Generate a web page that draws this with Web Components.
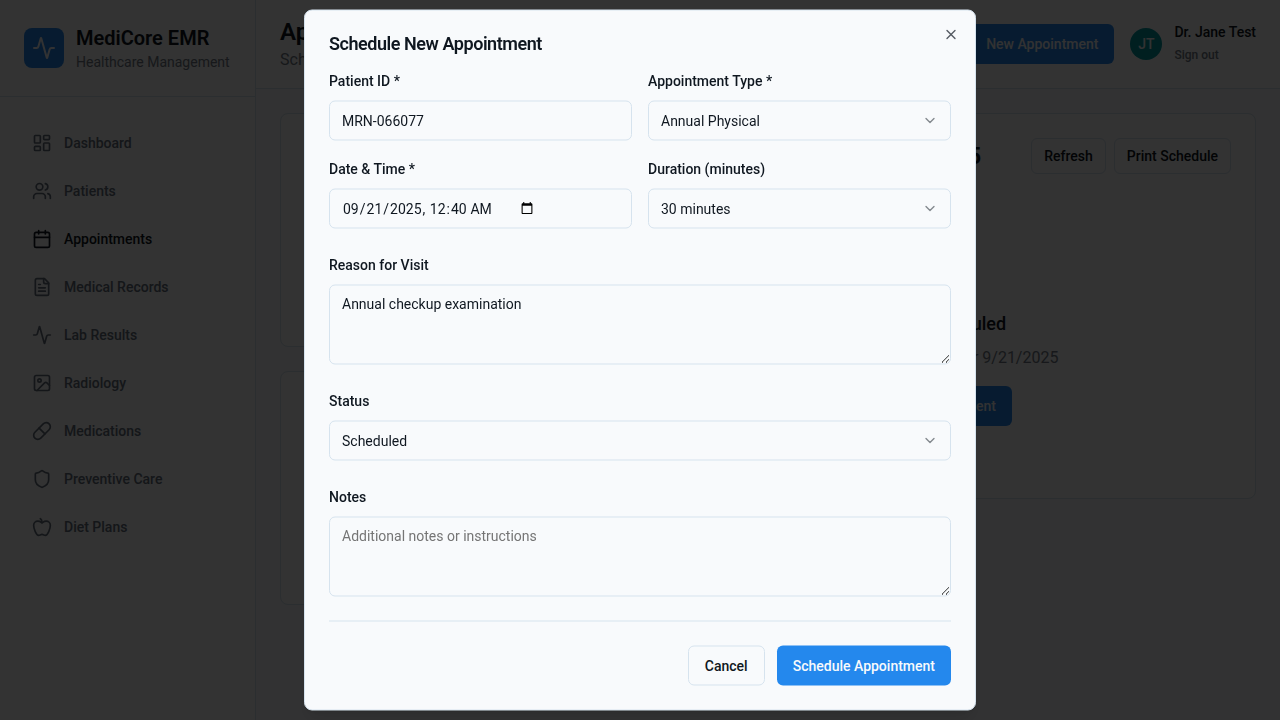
<!DOCTYPE html>
<html lang="en">
<head>
<meta charset="utf-8">
<title>MediCore EMR</title>
<style>
  :root {
    --bg: #f8fafc; --card: #fcfdfe; --fg: #0f1720; --muted: #737b85; --nav: #66707c;
    --border: #d6e3ee; --primary: #2488ed; --accent: #009aa2;
  }
  html, body { margin: 0; height: 100%; overflow: hidden; }
  body { font: 16px/24px Roboto, "Liberation Sans", sans-serif; color: var(--fg); background: var(--bg); }
</style>
</head>
<body>
<emr-app></emr-app>
<script>
const ICONS = {
  activity: '<path d="M22 12h-2.48a2 2 0 0 0-1.93 1.46l-2.35 8.36a.25.25 0 0 1-.48 0L9.24 2.18a.25.25 0 0 0-.48 0l-2.35 8.36A2 2 0 0 1 4.49 12H2"/>',
  dashboard: '<rect width="7" height="9" x="3" y="3" rx="1"/><rect width="7" height="5" x="14" y="3" rx="1"/><rect width="7" height="9" x="14" y="12" rx="1"/><rect width="7" height="5" x="3" y="16" rx="1"/>',
  users: '<path d="M16 21v-2a4 4 0 0 0-4-4H6a4 4 0 0 0-4 4v2"/><circle cx="9" cy="7" r="4"/><path d="M22 21v-2a4 4 0 0 0-3-3.87"/><path d="M16 3.13a4 4 0 0 1 0 7.75"/>',
  calendar: '<path d="M8 2v4"/><path d="M16 2v4"/><rect width="18" height="18" x="3" y="4" rx="2"/><path d="M3 10h18"/>',
  file: '<path d="M15 2H6a2 2 0 0 0-2 2v16a2 2 0 0 0 2 2h12a2 2 0 0 0 2-2V7Z"/><path d="M14 2v4a2 2 0 0 0 2 2h4"/><path d="M10 9H8"/><path d="M16 13H8"/><path d="M16 17H8"/>',
  image: '<rect width="18" height="18" x="3" y="3" rx="2" ry="2"/><circle cx="9" cy="9" r="2"/><path d="m21 15-3.086-3.086a2 2 0 0 0-2.828 0L6 21"/>',
  pill: '<path d="m10.5 20.5 10-10a4.95 4.95 0 1 0-7-7l-10 10a4.95 4.95 0 1 0 7 7Z"/><path d="m8.5 8.5 7 7"/>',
  shield: '<path d="M20 13c0 5-3.5 7.5-7.66 8.95a1 1 0 0 1-.67-.01C7.5 20.5 4 18 4 13V6a1 1 0 0 1 1-1c2 0 4.5-1.2 6.24-2.72a1.17 1.17 0 0 1 1.52 0C14.51 3.81 17 5 19 5a1 1 0 0 1 1 1z"/>',
  apple: '<path d="M12 20.94c1.5 0 2.75 1.06 4 1.06 3 0 6-8 6-12.22A4.91 4.91 0 0 0 17 5c-2.22 0-4 1.44-5 2-1-.56-2.78-2-5-2a4.9 4.9 0 0 0-5 4.78C2 14 5 22 8 22c1.25 0 2.5-1.06 4-1.06Z"/><path d="M10 2c1 .5 2 2 2 5"/>',
  chevron: '<path d="m6 9 6 6 6-6"/>',
  x: '<path d="M18 6 6 18"/><path d="m6 6 12 12"/>',
  plus: '<path d="M5 12h14"/><path d="M12 5v14"/>'
};

function define(name, css, html) {
  customElements.define(name, class extends HTMLElement {
    constructor() {
      super();
      const markup = typeof html === 'function' ? html(this) : html;
      this.attachShadow({ mode: 'open' }).innerHTML =
        `<style>*{box-sizing:border-box}${css}</style>${markup}`;
    }
  });
}

define('emr-icon',
  `:host{display:block;flex:none;width:20px;height:20px} svg{display:block;width:100%;height:100%}`,
  el => `<svg viewBox="0 0 24 24" fill="none" stroke="currentColor" stroke-width="2" stroke-linecap="round" stroke-linejoin="round">${ICONS[el.getAttribute('name')]}</svg>`);

define('emr-button',
  `:host{display:inline-flex;box-sizing:border-box;align-items:center;justify-content:center;gap:8px;height:40px;padding:0 16px;border-radius:6px;font-size:14px;line-height:20px;font-weight:500;white-space:nowrap;background:var(--primary);color:#f8fafc}
   :host([variant=outline]){background:var(--btn-bg,var(--bg));border:1px solid var(--border);color:var(--fg)}
   :host([size=sm]){height:36px;padding:0 12px}
   ::slotted(emr-icon){width:16px;height:16px}`,
  `<slot></slot>`);

define('emr-nav-item',
  `:host{display:flex;align-items:center;gap:12px;height:44px;padding:0 16px;box-sizing:border-box;font-size:14px;line-height:20px;font-weight:500;color:var(--nav)}
   :host([active]){color:var(--fg)}`,
  el => `<emr-icon name="${el.getAttribute('icon')}"></emr-icon><slot></slot>`);

define('emr-sidebar',
  `:host{display:flex;flex-direction:column;width:256px;flex:none;box-sizing:border-box;border-right:1px solid var(--border);background:var(--card)}
   header{display:flex;align-items:center;gap:12px;padding:24px;border-bottom:1px solid var(--border)}
   .logo{display:grid;place-items:center;width:40px;height:40px;border-radius:8px;background:var(--primary);color:#f8fafc}
   .logo emr-icon{width:24px;height:24px}
   h1{margin:0;font-size:20px;line-height:28px;font-weight:600;white-space:nowrap}
   p{margin:0;font-size:14px;line-height:20px;color:var(--muted);white-space:nowrap}
   nav{display:flex;flex-direction:column;gap:4px;padding:24px 16px}`,
  `<header><div class="logo"><emr-icon name="activity"></emr-icon></div><div><h1>MediCore EMR</h1><p>Healthcare Management</p></div></header>
   <nav>
    <emr-nav-item icon="dashboard">Dashboard</emr-nav-item>
    <emr-nav-item icon="users">Patients</emr-nav-item>
    <emr-nav-item icon="calendar" active>Appointments</emr-nav-item>
    <emr-nav-item icon="file">Medical Records</emr-nav-item>
    <emr-nav-item icon="activity">Lab Results</emr-nav-item>
    <emr-nav-item icon="image">Radiology</emr-nav-item>
    <emr-nav-item icon="pill">Medications</emr-nav-item>
    <emr-nav-item icon="shield">Preventive Care</emr-nav-item>
    <emr-nav-item icon="apple">Diet Plans</emr-nav-item>
   </nav>`);

define('emr-topbar',
  `:host{display:flex;align-items:center;justify-content:space-between;height:89px;box-sizing:border-box;padding:0 24px;border-bottom:1px solid var(--border);background:var(--card)}
   h2{margin:0;font-size:24px;line-height:32px;font-weight:600} p{margin:0;color:var(--muted)}
   .right{display:flex;align-items:center;gap:16px} .user{display:flex;align-items:center;gap:12px}
   .avatar{display:grid;place-items:center;width:32px;height:32px;border-radius:50%;background:var(--accent);color:#f8fafc;font-size:14px;font-weight:500}
   .name{font-size:14px;line-height:20px;font-weight:500;white-space:nowrap} .out{font-size:12px;line-height:24px;padding-top:1px;margin-bottom:-1px;font-weight:500;color:var(--muted)}`,
  `<div><h2>Appointments</h2><p>Schedule</p></div>
   <div class="right"><emr-button><emr-icon name="plus"></emr-icon>New Appointment</emr-button>
   <div class="user"><div class="avatar">JT</div><div><div class="name">Dr. Jane Test</div><div class="out">Sign out</div></div></div></div>`);

define('emr-card',
  `:host{display:block;box-sizing:border-box;padding:24px;border:1px solid var(--border);border-radius:8px;background:var(--card)}`,
  `<slot></slot>`);

define('emr-schedule',
  `:host{display:grid;grid-template-columns:226px 1fr;gap:24px;align-items:start;padding:24px}
   .side{display:grid;gap:24px} .side emr-card{height:234px}
   .head{display:flex;justify-content:flex-end;align-items:center;gap:8px;height:36px}
   .head h3{margin:0 42px 0 0;font-size:24px;line-height:32px;font-weight:600}
   emr-button{--btn-bg:var(--card)}
   .empty{display:flex;flex-direction:column;align-items:center;padding:72px 0 48px}
   .empty>emr-icon{width:48px;height:48px;color:var(--muted);margin-bottom:16px}
   h4{margin:0 0 8px;font-size:18px;line-height:28px;font-weight:500}
   p{margin:0 0 16px;color:var(--muted)}
   .empty emr-button{width:238px;justify-content:flex-end}`,
  `<div class="side"><emr-card></emr-card><emr-card></emr-card></div>
   <emr-card><div class="head"><h3>9/21/2025</h3><emr-button variant="outline" size="sm">Refresh</emr-button><emr-button variant="outline" size="sm">Print Schedule</emr-button></div>
   <div class="empty"><emr-icon name="calendar"></emr-icon><h4>No appointments scheduled</h4><p>No appointments are scheduled for 9/21/2025</p><emr-button><emr-icon name="plus"></emr-icon>Schedule an Appointment</emr-button></div></emr-card>`);

define('emr-field',
  `:host{display:grid;gap:8px;font-size:14px} label{display:block;height:24px;line-height:24px;font-weight:500}`,
  el => `<label>${el.getAttribute('label')}</label><slot></slot>`);

const BOX = `box-sizing:border-box;width:100%;border:1px solid var(--border);border-radius:6px;background:var(--bg);color:var(--fg);font:14px/20px Roboto,"Liberation Sans",sans-serif;padding:8px 12px;margin:0;`;

define('emr-input',
  `:host{display:block} input{${BOX}display:flex;height:40px;outline:0}`,
  el => `<input type="${el.getAttribute('type') || 'text'}" value="${el.getAttribute('value')}">`);

define('emr-select',
  `:host{display:flex;${BOX}height:40px;align-items:center;justify-content:space-between} emr-icon{width:16px;height:16px;opacity:.5}`,
  `<span><slot></slot></span><emr-icon name="chevron"></emr-icon>`);

define('emr-textarea',
  `:host{display:block} textarea{${BOX}display:block;height:80px;outline:0} textarea::placeholder{color:#757575}`,
  el => `<textarea placeholder="${el.getAttribute('placeholder') || ''}">${el.getAttribute('value') || ''}</textarea>`);

define('emr-dialog',
  `:host{position:fixed;left:50%;top:50%;transform:translate(-50%,-50%);box-sizing:border-box;width:672px;display:grid;gap:16px;padding:24px;border:1px solid var(--border);border-radius:8px;background:var(--bg);box-shadow:0 10px 15px -3px rgba(0,0,0,.1),0 4px 6px -4px rgba(0,0,0,.1)}
   h2{margin:0;font-size:18px;line-height:18px;font-weight:600;letter-spacing:-.45px}
   .close{position:absolute;right:16px;top:16px;width:16px;height:16px;opacity:.7}`,
  `<h2>Schedule New Appointment</h2><slot></slot><emr-icon class="close" name="x"></emr-icon>`);

define('emr-appointment-form',
  `:host{display:grid;gap:24px} .grid{display:grid;grid-template-columns:1fr 1fr;gap:16px}
   footer{display:flex;justify-content:flex-end;gap:12px;padding-top:24px;border-top:1px solid var(--border)}`,
  `<div class="grid">
    <emr-field label="Patient ID *"><emr-input value="MRN-066077"></emr-input></emr-field>
    <emr-field label="Appointment Type *"><emr-select>Annual Physical</emr-select></emr-field>
    <emr-field label="Date &amp; Time *"><emr-input type="datetime-local" value="2025-09-21T00:40"></emr-input></emr-field>
    <emr-field label="Duration (minutes)"><emr-select>30 minutes</emr-select></emr-field>
   </div>
   <emr-field label="Reason for Visit"><emr-textarea value="Annual checkup examination"></emr-textarea></emr-field>
   <emr-field label="Status"><emr-select>Scheduled</emr-select></emr-field>
   <emr-field label="Notes"><emr-textarea placeholder="Additional notes or instructions"></emr-textarea></emr-field>
   <footer><emr-button variant="outline">Cancel</emr-button><emr-button>Schedule Appointment</emr-button></footer>`);

define('emr-app',
  `:host{display:flex;height:100vh;overflow:hidden} main{flex:1;min-width:0}
   .overlay{position:fixed;inset:0;background:rgba(0,0,0,.8)}`,
  `<emr-sidebar></emr-sidebar><main><emr-topbar></emr-topbar><emr-schedule></emr-schedule></main>
   <div class="overlay"></div>
   <emr-dialog><emr-appointment-form></emr-appointment-form></emr-dialog>`);
</script>
</body>
</html>
